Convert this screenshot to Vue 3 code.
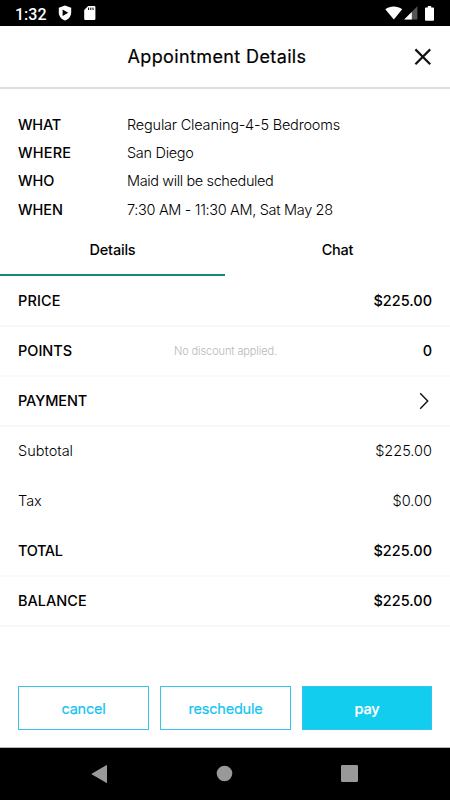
<template>
  <div class="screen">
    <div class="status-bar">
      <span class="clock">1:32</span>
      <svg class="shield" width="14" height="16" viewBox="0 0 14 16">
        <path d="M7 0.5L13.2 2.8V7.4C13.2 11 10.6 14.2 7 15.5C3.4 14.2 0.8 11 0.8 7.4V2.8Z" fill="#fff" />
        <path d="M4.6 4.6V11L10.2 7.8Z" fill="#000" />
      </svg>
      <svg class="sd-card" width="12" height="14" viewBox="0 0 12 14">
        <path d="M4.2 0H10.4Q11.4 0 11.4 1V13Q11.4 14 10.4 14H1.2Q0.2 14 0.2 13V4Z" fill="#fff" />
        <path d="M4.6 1.6V4M6.8 1.6V4M9 1.6V4" stroke="#000" stroke-width="1" />
      </svg>
      <div class="status-right">
        <svg width="18" height="14" viewBox="0 0 18 14">
          <path d="M0.3 3.2C5.2 -0.4 12.2 -0.4 17.2 3.2L8.8 13.4Z" fill="#fff" />
        </svg>
        <svg class="signal" width="14" height="14" viewBox="0 0 14 14">
          <path d="M13.4 0.2V13.6H0.2Z" fill="#555" />
          <path d="M7.8 5.9V13.6H0.2Z" fill="#fff" />
        </svg>
        <svg class="battery" width="9" height="15" viewBox="0 0 9 15">
          <path d="M2.8 0H6.2V1.4H8.2Q9 1.4 9 2.2V14Q9 14.8 8.2 14.8H0.8Q0 14.8 0 14V2.2Q0 1.4 0.8 1.4H2.8Z" fill="#fff" />
        </svg>
      </div>
    </div>

    <header class="header">
      <h1 class="title">Appointment Details</h1>
      <button class="close" aria-label="Close">
        <svg width="18" height="18" viewBox="0 0 18 18">
          <path d="M1.4 1.4L16.2 16.2M16.2 1.4L1.4 16.2" stroke="#111" stroke-width="2.2" fill="none" />
        </svg>
      </button>
    </header>

    <dl class="summary">
      <div v-for="item in summary" :key="item.label" class="summary-row">
        <dt :style="{ letterSpacing: item.labelSpacing + 'px' }">{{ item.label }}</dt>
        <dd :style="{ letterSpacing: item.spacing + 'px' }">{{ item.value }}</dd>
      </div>
    </dl>

    <nav class="tabs">
      <button
        v-for="tab in tabs"
        :key="tab"
        :class="['tab', { active: selectedTab === tab }]"
        @click="selectedTab = tab"
      >
        {{ tab }}
      </button>
    </nav>

    <div class="lines">
      <div v-for="line in lines" :key="line.label" :class="['line', { light: line.light, divided: line.divided }]">
        <span class="line-label" :style="{ letterSpacing: line.spacing + 'px' }">{{ line.label }}</span>
        <span v-if="line.note" class="note">{{ line.note }}</span>
        <span v-if="line.value" class="line-value">{{ line.value }}</span>
        <svg v-else class="chevron" width="10" height="18" viewBox="0 0 10 18">
          <path d="M1.2 1.3L8.7 9L1.2 16.7" stroke="#111" stroke-width="1.4" fill="none" />
        </svg>
      </div>
    </div>

    <div class="actions">
      <button class="btn cancel">cancel</button>
      <button class="btn reschedule">reschedule</button>
      <button class="btn pay">pay</button>
    </div>

    <div class="nav-bar">
      <svg width="17" height="20" viewBox="0 0 17 20">
        <path d="M15.2 1.2Q16 0.7 16 1.6V18.4Q16 19.3 15.2 18.8L1 10.5Q0.2 10 1 9.5Z" fill="#999" />
      </svg>
      <svg width="17" height="17" viewBox="0 0 17 17">
        <circle cx="8.5" cy="8.5" r="7.8" fill="#999" />
      </svg>
      <svg width="17" height="17" viewBox="0 0 17 17">
        <rect width="17" height="17" rx="1.3" fill="#999" />
      </svg>
    </div>
  </div>
</template>

<script setup>
import { ref } from 'vue'

const selectedTab = ref('Details')
const tabs = ['Details', 'Chat']

// letter spacing is tuned per text, in px
const summary = [
  { label: 'WHAT', value: 'Regular Cleaning-4-5 Bedrooms', labelSpacing: -0.2, spacing: -0.2 },
  { label: 'WHERE', value: 'San Diego', labelSpacing: 0.2, spacing: -0.3 },
  { label: 'WHO', value: 'Maid will be scheduled', labelSpacing: -0.1, spacing: -0.38 },
  { label: 'WHEN', value: '7:30 AM - 11:30 AM, Sat May 28', labelSpacing: 0, spacing: -0.33 }
]

const lines = [
  { label: 'PRICE', value: '$225.00', spacing: 0.1, divided: true },
  { label: 'POINTS', value: '0', note: 'No discount applied.', spacing: 0, divided: true },
  { label: 'PAYMENT', value: '', spacing: -0.1, divided: true },
  { label: 'Subtotal', value: '$225.00', spacing: 0, light: true },
  { label: 'Tax', value: '$0.00', spacing: 0, light: true },
  { label: 'TOTAL', value: '$225.00', spacing: -0.35, divided: true },
  { label: 'BALANCE', value: '$225.00', spacing: 0, divided: true }
]
</script>

<style>
body {
  margin: 0;
  background: #fff;
}
</style>

<style scoped>
.screen {
  width: 450px;
  height: 800px;
  display: flex;
  flex-direction: column;
  overflow: hidden;
  background: #fff;
  color: #000;
  font-family: Inter, "Liberation Sans", sans-serif;
  font-size: 14.5px;
}

button {
  font: inherit;
  color: inherit;
  background: none;
  border: none;
  padding: 0;
  cursor: pointer;
}

svg {
  display: block;
  flex-shrink: 0;
}

.status-bar {
  height: 26px;
  flex-shrink: 0;
  box-sizing: border-box;
  padding: 0 16px 0 15px;
  display: flex;
  align-items: center;
  background: #000;
  color: #fff;
}

.clock {
  width: 43px;
  padding-top: 2px;
  font-family: Roboto, sans-serif;
  font-size: 16px;
  font-weight: 500;
}

.sd-card {
  margin-left: 12px;
}

.status-right {
  display: flex;
  align-items: center;
  margin-left: auto;
}

.signal {
  margin-left: 1px;
}

.battery {
  margin-left: 7px;
}

.header {
  height: 63px;
  flex-shrink: 0;
  box-sizing: border-box;
  border-bottom: 2px solid #dedede;
  display: grid;
  grid-template-columns: 1fr auto 1fr;
  align-items: center;
  padding: 0 18px 0 2px;
}

.title {
  grid-column: 2;
  margin: 0;
  font-size: 18px;
  font-weight: 400;
  letter-spacing: 0.38px;
  -webkit-text-stroke: 0.2px #000;
}

.close {
  justify-self: end;
}

.summary {
  margin: 21px 0 0;
  padding: 0 18px;
}

.summary-row {
  display: grid;
  grid-template-columns: 109px 1fr;
  height: 28.3px;
  align-items: center;
}

.summary-row dt {
  font-weight: 500;
}

.summary-row dd {
  margin: 0;
  font-weight: 300;
  white-space: nowrap;
}

.tabs {
  display: grid;
  grid-template-columns: 1fr 1fr;
  height: 53px;
  flex-shrink: 0;
}

.tab {
  padding-top: 2px;
  font-weight: 500;
  letter-spacing: -0.2px;
  border-bottom: 2px solid transparent;
}

.tab.active {
  border-bottom-color: #16877a;
}

.lines {
  padding-top: 1px;
}

.line {
  height: 50px;
  box-sizing: border-box;
  padding: 0 18px 1px;
  display: grid;
  grid-template-columns: 156px 1fr auto;
  align-items: center;
  border-bottom: 2px solid transparent;
  font-weight: 500;
}

.line.divided {
  border-bottom-color: #f9f9f9;
}

.line.light {
  font-weight: 300;
}

.note {
  font-size: 11px;
  font-weight: 300;
  letter-spacing: -0.12px;
  color: #b8b8b8;
}

.line-value,
.chevron {
  grid-column: 3;
}

.chevron {
  margin-right: 3px;
}

.actions {
  display: grid;
  grid-template-columns: 131px 131px 1fr;
  gap: 11px;
  padding: 0 18px;
  margin-top: 59px;
}

.btn {
  height: 44px;
  box-sizing: border-box;
  border: 1px solid #36c5ea;
  color: #12c4ee;
  font-weight: 400;
  letter-spacing: -0.2px;
  -webkit-text-stroke: 0.2px currentColor;
}

.btn.pay {
  background: #12cdee;
  color: #fff;
  font-weight: 500;
}

.nav-bar {
  height: 53px;
  flex-shrink: 0;
  box-sizing: border-box;
  margin-top: auto;
  padding: 0 92px 1px 91px;
  display: flex;
  align-items: center;
  justify-content: space-between;
  border-top: 1px solid #b5b5b5;
  background: #000;
}
</style>
